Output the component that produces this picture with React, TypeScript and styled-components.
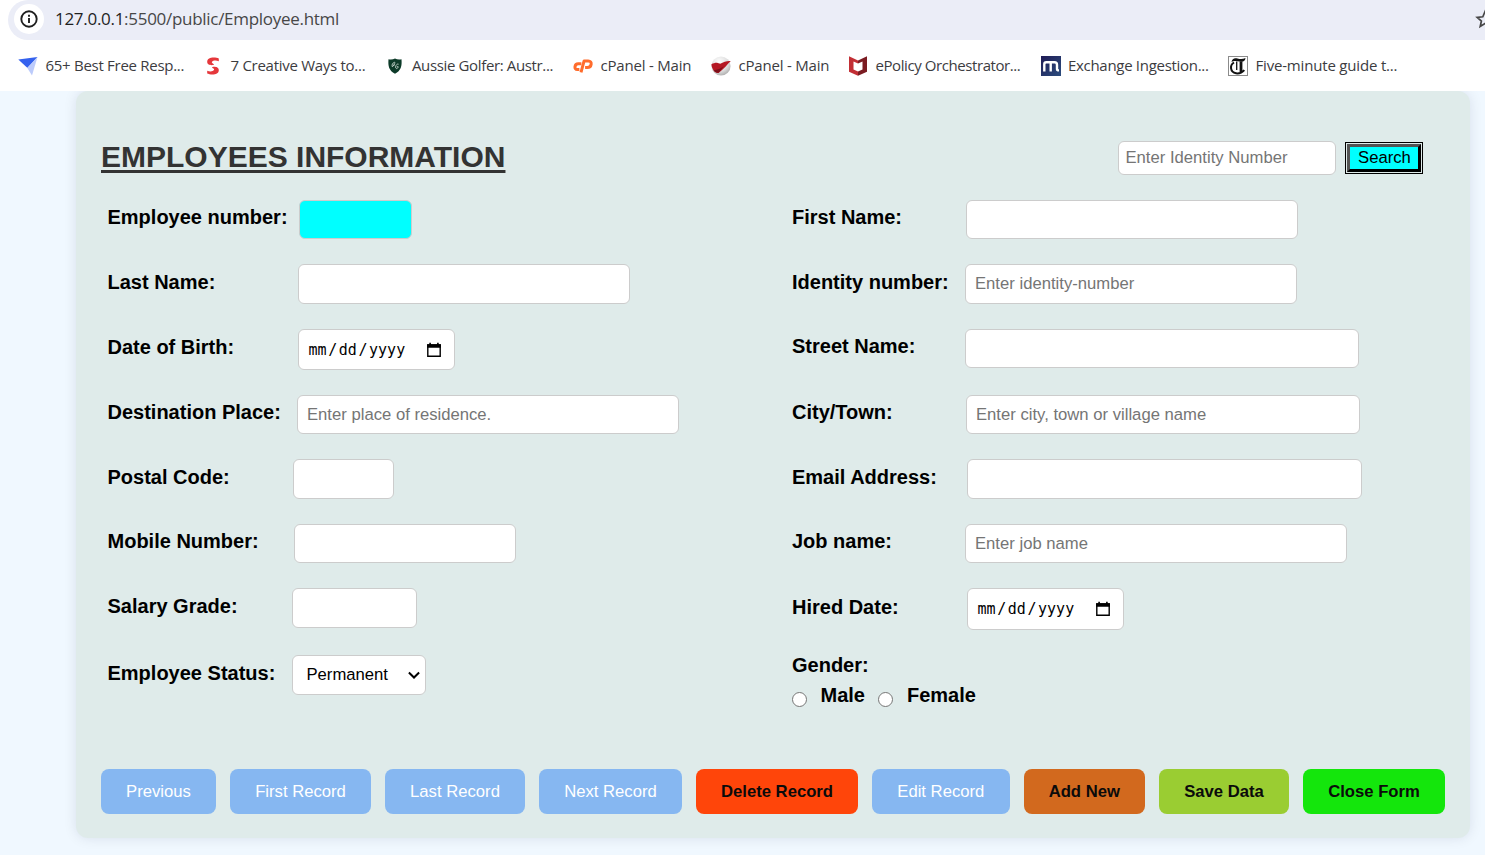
import React from "react";
import styled, { createGlobalStyle } from "styled-components";

const GlobalStyle = createGlobalStyle`
  *, *::before, *::after { box-sizing: border-box; }
  html, body { margin: 0; padding: 0; }
  body {
    height: 855px;
    overflow: hidden;
    background: #f0f8ff;
    font-family: "Liberation Sans", Arial, sans-serif;
    color: #000;
  }
`;

const Page = styled.div`
  display: flex;
  flex-direction: column;
  width: 1485px;
  height: 855px;
  overflow: hidden;
`;

const BrowserChrome = styled.header`
  flex: none;
  height: 91px;
  background: #fff;
  font-family: "Open Sans", "Noto Sans", sans-serif;
  z-index: 1;
`;

const AddressBar = styled.div`
  display: flex;
  align-items: center;
  height: 40px;
  margin-left: 8px;
  padding: 0 0 2px 6px;
  background: #ebedf7;
  border-radius: 20px 0 0 20px;
`;

const InfoBadge = styled.span`
  display: flex;
  align-items: center;
  justify-content: center;
  width: 30px;
  height: 30px;
  border-radius: 50%;
  background: #fff;
`;

const Url = styled.span`
  flex: 1;
  margin-left: 11px;
  font-size: 17px;
  line-height: 24px;
  letter-spacing: -0.29px;
  color: #474747;
  white-space: nowrap;

  b {
    font-weight: 400;
    color: #1f1f1f;
  }
`;

const StarSlot = styled.span`
  display: flex;
  flex: none;
  width: 10px;
  overflow: hidden;

  svg {
    flex: none;
  }
`;

const Bookmarks = styled.nav`
  display: flex;
  gap: 20px;
  height: 51px;
  padding-left: 18px;
  align-items: center;
`;

const Bookmark = styled.a`
  display: flex;
  flex: none;
  align-items: center;
  gap: 7.5px;

  svg {
    flex: none;
    display: block;
  }
`;

const BookmarkText = styled.span<{ $width: number; $track: number }>`
  width: ${(p) => p.$width}px;
  padding-bottom: 2px;
  font-size: 15px;
  line-height: 20px;
  letter-spacing: ${(p) => p.$track}px;
  color: #3c3c3f;
  white-space: nowrap;
`;

const Card = styled.main`
  flex: none;
  width: 1394px;
  height: 747px;
  margin-left: 76px;
  padding: 50px 25px 0;
  border-radius: 12px;
  background: #dfebea;
  box-shadow: 0 0 13px rgba(0, 0, 60, 0.1);
`;

const TitleBar = styled.div`
  display: flex;
  justify-content: space-between;
  height: 59px;
  padding-right: 22px;
`;

const Title = styled.h1`
  margin: -1px 0 0;
  font-size: 30px;
  line-height: 34px;
  font-weight: 700;
  color: #333;
  text-decoration: underline;
  text-decoration-thickness: 3px;
  text-underline-offset: 3px;
`;

const SearchGroup = styled.div`
  display: flex;
  gap: 9px;
`;

const Control = styled.input<{ $w: number; $h: number; $pad?: number; $fill?: string }>`
  flex: none;
  width: ${(p) => p.$w}px;
  height: ${(p) => p.$h}px;
  margin: 0;
  padding: 0 ${(p) => p.$pad ?? 9}px;
  border: 1px solid #ccc;
  border-radius: 6px;
  background: ${(p) => p.$fill ?? "#fff"};
  font-family: inherit;
  font-size: 16.67px;
  outline: none;

  &::placeholder {
    color: #757575;
    opacity: 1;
  }
`;

const SearchButton = styled.button`
  width: 74px;
  height: 28px;
  margin: 3px 2px 0;
  padding: 0 0 0 1px;
  background: #0ff;
  border: 3px outset #000;
  outline: 1px solid #000;
  outline-offset: 1px;
  font-family: inherit;
  font-size: 16.67px;
  line-height: 20px;
  color: #000;
`;

const Columns = styled.div`
  display: grid;
  grid-template-columns: 684.5px 1fr;
  height: 569px;
  padding-left: 6px;
`;

const Column = styled.div`
  display: flex;
  flex-direction: column;
`;

const Row = styled.div<{ $h: number; $after: number }>`
  display: flex;
  align-items: center;
  height: ${(p) => p.$h}px;
  margin-bottom: ${(p) => p.$after}px;
`;

const Label = styled.label<{ $w?: number }>`
  flex: none;
  width: ${(p) => (p.$w ? `${p.$w}px` : "auto")};
  padding: 0 0 5px 0.5px;
  font-size: 20px;
  line-height: 24px;
  font-weight: 700;
  white-space: nowrap;
`;

const PickerBox = styled.div<{ $w: number; $h: number; $left: number; $right: number }>`
  display: flex;
  align-items: center;
  justify-content: space-between;
  width: ${(p) => p.$w}px;
  height: ${(p) => p.$h}px;
  padding: 0 ${(p) => p.$right}px 0 ${(p) => p.$left}px;
  border: 1px solid #ccc;
  border-radius: 6px;
  background: #fff;
  font-size: 16.67px;
`;

const DateText = styled.span`
  display: flex;
  gap: 1.6px;
  font-family: "DejaVu Sans Mono", monospace;
  font-size: 15px;
  line-height: 20px;
`;

const GenderGroup = styled.div`
  display: flex;
  flex-direction: column;
  margin-top: -2px;
`;

const RadioRow = styled.div`
  display: flex;
  align-items: flex-start;
  height: 30px;
  margin-top: 1px;
`;

const Radio = styled.span<{ $before?: number }>`
  width: 15px;
  height: 15px;
  margin: 9px 13.500px 0 ${(p) => p.$before ?? 0}px;
  border: 1px solid #767676;
  border-radius: 50%;
  background: #fff;
`;

const Actions = styled.footer`
  display: flex;
  gap: 14px;
`;

const ActionButton = styled.button<{ $w: number; $fill: string; $strong?: boolean }>`
  flex: none;
  width: ${(p) => p.$w}px;
  height: 45px;
  padding: 0;
  border: 0;
  border-radius: 8px;
  background: ${(p) => p.$fill};
  color: ${(p) => (p.$strong ? "#0b0b0b" : "#fff")};
  font-family: inherit;
  font-size: 16.67px;
  font-weight: ${(p) => (p.$strong ? 700 : 400)};
  white-space: nowrap;
`;

const InfoIcon = () => (
  <svg width="18" height="18" viewBox="0 0 18 18" fill="none" stroke="#1f1f1f">
    <circle cx="9" cy="9" r="7.7" strokeWidth="1.9" />
    <path d="M9 8v5M9 4.8v1.9" strokeWidth="1.9" />
  </svg>
);

const StarIcon = () => (
  <svg width="20" height="20" viewBox="0 0 20 20" fill="none" stroke="#474747" strokeWidth="1.7">
    <path d="M10 2.6l2.2 5.2 5.6.5-4.2 3.7 1.2 5.5-4.8-2.9-4.8 2.9 1.2-5.5-4.2-3.7 5.6-.5z" />
  </svg>
);

const PlaneIcon = () => (
  <svg width="20" height="20" viewBox="0 0 20 20">
    <path d="M.3 3.5L19.5 1 9.5 12z" fill="#3461ee" />
    <path d="M19.5 1L14 19.5 9.2 11.8z" fill="#bccbfb" />
  </svg>
);

const RibbonIcon = () => (
  <svg width="20" height="20" viewBox="0 0 20 20" fill="#e5373b">
    <path d="M15.800 5.200V2.500C13 1.200 4.200.3 4.200 5.800c0 3.400 4 3.600 6.300 3.200.6-.2.500-.9 0-1.100C6.500 6.500 10.500 3.200 15.800 5.200z" />
    <path d="M4.200 14.800v2.700C7 18.800 15.800 19.700 15.800 14.200c0-3.400-4-3.600-6.300-3.200-.6.200-.5.900 0 1.100 4 1.400 0 4.700-5.300 2.700z" />
  </svg>
);

const ShieldIcon = () => (
  <svg width="20" height="20" viewBox="0 0 20 20">
    <path d="M10 2.500c2 1.200 4.300 1.200 6.500.8.600 6.700-.5 11.500-6.500 14.500C4 14.800 2.900 10 3.500 3.300c2.200.4 4.500.4 6.500-.8z" fill="#0d3b29" />
    <path d="M6.800 9.600c.7-2.500 2.600-4 3-3.200.4.900-1.600 4.500-2.600 4.200-.6-.3 1-1.500 2.500-1.700M13.600 8.200c-1-.8-3 .8-3 2.900 0 2.300 2.500 1.600 2.600-.4h-1.300" fill="none" stroke="#c4d2cb" strokeWidth=".9" />
  </svg>
);

const PanelIcon = () => (
  <svg width="20" height="20" viewBox="0 0 20 20" fill="none" stroke="#ff6c2c" strokeWidth="3" strokeLinejoin="round">
    <path d="M8.400 7.800H5.200C1.500 7.800 .6 13.600 4.300 13.600H6.400" />
    <path d="M8 16.300L11.100 4.900H15.200C19.800 4.900 18.800 11.500 14.300 11.500H12.100" />
  </svg>
);

const BallIcon = () => (
  <svg width="20" height="20" viewBox="0 0 20 20">
    <defs>
      <radialGradient id="ball" cx=".4" cy=".3" r=".75">
        <stop offset="0" stopColor="#fff" />
        <stop offset=".65" stopColor="#dcdcdc" />
        <stop offset="1" stopColor="#a9a9a9" />
      </radialGradient>
    </defs>
    <circle cx="10" cy="10" r="9.600" fill="url(#ball)" />
    <path d="M.4 8.200c2.300-1.200 4.800-1.800 6.300-1.300l2.600.8C12.500 6 16 4.600 19.800 5 16.500 8 13 13 7.600 17 4 17 .8 13.500.4 8.200z" fill="#b51824" />
    <path d="M2.500 14.500l5.500-1.500 4.500-2.500c-1.200 2-3.200 4.500-5 5.900C5.600 17 3.800 16 2.500 14.500z" fill="#7c101a" />
  </svg>
);

const CrestIcon = () => (
  <svg width="20" height="20" viewBox="0 0 20 20">
    <path d="M1 .3l9 4.300v3L5.500 5.400v8L10 15.500v4.300l-9-4z" fill="#c22f35" />
    <path d="M19 .3l-9 4.300v3l4.500-2.200v8L10 15.500v4.300l9-4z" fill="#7b1c22" />
  </svg>
);

const ArchIcon = () => (
  <svg width="20" height="20" viewBox="0 0 20 20">
    <defs>
      <linearGradient id="arch" x1="0" y1="0" x2="1" y2="1">
        <stop offset="0" stopColor="#1f1b55" />
        <stop offset="1" stopColor="#2c4d7e" />
      </linearGradient>
    </defs>
    <rect width="20" height="20" fill="url(#arch)" />
    <path d="M3.300 15.500V8.300Q3.300 6.300 5.300 6.300H13.500Q16 6.300 16 8.800V13Q16 14.400 18 14.400M9.700 6.300V15.500" fill="none" stroke="#fff" strokeWidth="2.400" />
  </svg>
);

const GothicIcon = () => (
  <svg width="20" height="20" viewBox="0 0 20 20">
    <rect x=".5" y=".5" width="19" height="19" fill="#fff" stroke="#8b8b8b" />
    <path d="M3.500 6C4.200 2.500 6.500 1.600 9.500 2.500c2.800.9 5.300.9 8-.5-.3 2.900-2 4-4.700 3.700C9.500 5.300 6.800 4 3.500 6z" fill="#111" />
    <path d="M6 6.500C1.500 9 2 16.300 8 17.300c3.400.5 6-.6 8.300-3.200" fill="none" stroke="#111" strokeWidth="2" />
    <path d="M8.700 5.500v8.500" stroke="#111" strokeWidth="1.300" />
    <path d="M13 5.500v10.500" stroke="#111" strokeWidth="2.800" />
  </svg>
);

const CalendarIcon = () => (
  <svg width="16" height="16" viewBox="0 0 16 16">
    <path d="M1.800 3h12.400v11.200H1.800z" fill="none" stroke="#000" strokeWidth="1.400" />
    <path d="M1.100 2.300h13.800v3.500H1.100zM3.300.7h1.600v2H3.300zM11.100.7h1.600v2h-1.600z" />
  </svg>
);

const ChevronIcon = () => (
  <svg width="12" height="8" viewBox="0 0 12 8" fill="none" stroke="#000" strokeWidth="2">
    <path d="M.9 1.500L6 6.500l5.100-5" />
  </svg>
);

const bookmarks = [
  { icon: <PlaneIcon />, text: "65+ Best Free Resp...", width: 137.5, track: -0.28 },
  { icon: <RibbonIcon />, text: "7 Creative Ways to...", width: 134, track: -0.28 },
  { icon: <ShieldIcon />, text: "Aussie Golfer: Austr...", width: 141, track: -0.36 },
  { icon: <PanelIcon />, text: "cPanel - Main", width: 90.5, track: -0.2 },
  { icon: <BallIcon />, text: "cPanel - Main", width: 89.5, track: -0.2 },
  { icon: <CrestIcon />, text: "ePolicy Orchestrator...", width: 145, track: -0.42 },
  { icon: <ArchIcon />, text: "Exchange Ingestion...", width: 140, track: -0.3 },
  { icon: <GothicIcon />, text: "Five-minute guide t...", width: 141, track: -0.18 },
];

type Field = {
  label: string;
  labelWidth: number;
  w: number;
  h: number;
  after: number;
  kind?: "date" | "select";
  hint?: string;
  fill?: string;
};

const leftFields: Field[] = [
  { label: "Employee number:", labelWidth: 192, w: 113, h: 39, after: 25, fill: "#0ff" },
  { label: "Last Name:", labelWidth: 191, w: 332, h: 40, after: 25 },
  { label: "Date of Birth:", labelWidth: 191, w: 157, h: 41, after: 25, kind: "date" },
  { label: "Destination Place:", labelWidth: 190, w: 382, h: 39, after: 25, hint: "Enter place of residence." },
  { label: "Postal Code:", labelWidth: 186, w: 101, h: 40, after: 25 },
  { label: "Mobile Number:", labelWidth: 187, w: 222, h: 39, after: 25 },
  { label: "Salary Grade:", labelWidth: 185, w: 125, h: 40, after: 27 },
  { label: "Employee Status:", labelWidth: 185, w: 134, h: 40, after: 0, kind: "select" },
];

const rightFields: Field[] = [
  { label: "First Name:", labelWidth: 174.5, w: 332, h: 39, after: 25 },
  { label: "Identity number:", labelWidth: 173.5, w: 332, h: 40, after: 25, hint: "Enter identity-number" },
  { label: "Street Name:", labelWidth: 173.5, w: 394, h: 39, after: 27 },
  { label: "City/Town:", labelWidth: 174.5, w: 394, h: 39, after: 25, hint: "Enter city, town or village name" },
  { label: "Email Address:", labelWidth: 175.5, w: 395, h: 40, after: 25 },
  { label: "Job name:", labelWidth: 173.5, w: 382, h: 39, after: 25, hint: "Enter job name" },
  { label: "Hired Date:", labelWidth: 175.5, w: 157, h: 42, after: 25, kind: "date" },
];

const actions = [
  { text: "Previous", w: 115, fill: "#86b7f1" },
  { text: "First Record", w: 141, fill: "#86b7f1" },
  { text: "Last Record", w: 140, fill: "#86b7f1" },
  { text: "Next Record", w: 143, fill: "#86b7f1" },
  { text: "Delete Record", w: 162, fill: "#ff450a", strong: true },
  { text: "Edit Record", w: 137.6, fill: "#86b7f1" },
  { text: "Add New", w: 121.4, fill: "#d2691e", strong: true },
  { text: "Save Data", w: 130, fill: "#9acd32", strong: true },
  { text: "Close Form", w: 142, fill: "#14e60c", strong: true },
];

const FieldControl = ({ field }: { field: Field }) => {
  if (field.kind === "date") {
    return (
      <PickerBox $w={field.w} $h={field.h} $left={9.5} $right={12}>
        <DateText>
          <span>mm</span>
          <span>/</span>
          <span>dd</span>
          <span>/</span>
          <span>yyyy</span>
        </DateText>
        <CalendarIcon />
      </PickerBox>
    );
  }
  if (field.kind === "select") {
    return (
      <PickerBox $w={field.w} $h={field.h} $left={13.5} $right={5}>
        <span>Permanent</span>
        <ChevronIcon />
      </PickerBox>
    );
  }
  return <Control $w={field.w} $h={field.h} $fill={field.fill} placeholder={field.hint} />;
};

const FieldRow = ({ field }: { field: Field }) => (
  <Row $h={field.h} $after={field.after}>
    <Label $w={field.labelWidth}>{field.label}</Label>
    <FieldControl field={field} />
  </Row>
);

export default function App() {
  return (
    <>
      <GlobalStyle />
      <Page>
        <BrowserChrome>
          <AddressBar>
            <InfoBadge>
              <InfoIcon />
            </InfoBadge>
            <Url>
              <b>127.0.0.1</b>:5500/public/Employee.html
            </Url>
            <StarSlot>
              <StarIcon />
            </StarSlot>
          </AddressBar>
          <Bookmarks>
            {bookmarks.map((b, i) => (
              <Bookmark key={i}>
                {b.icon}
                <BookmarkText $width={b.width} $track={b.track}>
                  {b.text}
                </BookmarkText>
              </Bookmark>
            ))}
          </Bookmarks>
        </BrowserChrome>
        <Card>
          <TitleBar>
            <Title>EMPLOYEES INFORMATION</Title>
            <SearchGroup>
              <Control $w={218} $h={34} $pad={6.5} placeholder="Enter Identity Number" />
              <SearchButton>Search</SearchButton>
            </SearchGroup>
          </TitleBar>
          <Columns>
            <Column>
              {leftFields.map((f) => (
                <FieldRow key={f.label} field={f} />
              ))}
            </Column>
            <Column>
              {rightFields.map((f) => (
                <FieldRow key={f.label} field={f} />
              ))}
              <GenderGroup>
                <Label>Gender:</Label>
                <RadioRow>
                  <Radio />
                  <Label>Male</Label>
                  <Radio $before={13} />
                  <Label>Female</Label>
                </RadioRow>
              </GenderGroup>
            </Column>
          </Columns>
          <Actions>
            {actions.map((a) => (
              <ActionButton key={a.text} $w={a.w} $fill={a.fill} $strong={a.strong}>
                {a.text}
              </ActionButton>
            ))}
          </Actions>
        </Card>
      </Page>
    </>
  );
}
